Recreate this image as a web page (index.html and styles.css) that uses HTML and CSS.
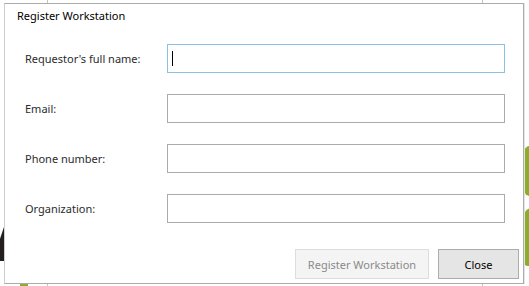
FILE: index.html
```html
<!DOCTYPE html>
<html lang="en">
  <head>
    <meta charset="UTF-8" />
    <title>Register Workstation</title>
    <link rel="stylesheet" href="styles.css">
  </head>
  <body>
    <div class="desktop">
      <div class="back-window top"></div>
      <div class="back-window bottom"></div>
      <div class="leaf leaf-top"></div>
      <div class="leaf leaf-bottom"></div>
      <div class="leaf leaf-foot"></div>
      <div class="dark-shape"></div>

      <div class="dialog">
        <div class="dialog-title">Register Workstation</div>
        <form class="reg-form">
          <div class="form-row">
            <label for="fullname">Requestor's full name:</label>
            <div class="field">
              <input type="text" id="fullname" class="focused">
              <span class="caret"></span>
            </div>
          </div>
          <div class="form-row">
            <label for="email">Email:</label>
            <div class="field"><input type="text" id="email"></div>
          </div>
          <div class="form-row">
            <label for="phone">Phone number:</label>
            <div class="field"><input type="text" id="phone"></div>
          </div>
          <div class="form-row">
            <label for="org">Organization:</label>
            <div class="field"><input type="text" id="org"></div>
          </div>
          <div class="button-row">
            <button type="button" class="btn btn-register" disabled>Register Workstation</button>
            <button type="button" class="btn btn-close">Close</button>
          </div>
        </form>
      </div>
    </div>
  </body>
</html>
```

FILE: styles.css
```css
body {
  margin: 0;
  background: #fff;
  font-family: "Segoe UI", "Noto Sans", sans-serif;
  color: #1e1e1e;
}
.desktop {
  position: relative;
  width: 529px;
  height: 286px;
  overflow: hidden;
  background: #fff;
}
.back-window {
  position: absolute;
  left: 47px;
  width: 434px;
  border: 1px solid #c4c4c4;
}
.back-window.top {
  top: 0;
  height: 4px;
  border-top: 0;
}
.back-window.bottom {
  top: 283px;
  height: 10px;
  border-bottom: 0;
}
.leaf {
  position: absolute;
  background: #8dac2a;
}
.leaf-top {
  left: 524px;
  top: 146px;
  width: 10px;
  height: 50px;
  border-radius: 6px 0 0 6px;
}
.leaf-bottom {
  left: 524px;
  top: 208px;
  width: 10px;
  height: 58px;
  border-radius: 8px 0 0 4px;
}
.leaf-foot {
  left: 20px;
  top: 284px;
  width: 8px;
  height: 4px;
}
.dark-shape {
  position: absolute;
  left: 0;
  top: 224px;
  width: 5px;
  height: 37px;
  background: #231f1e;
  clip-path: polygon(100% 0, 100% 100%, 0 100%, 0 40%);
}
.dialog {
  position: absolute;
  left: 4px;
  top: 3px;
  width: 518px;
  height: 279px;
  background: #fff;
  border: 1px solid #ababab;
  border-left-color: #cfcfcf;
  box-shadow: 1px 0 0 #e4e4e4;
}
.dialog-title {
  padding: 4px 0 0 12px;
  height: 20px;
  font-size: 11px;
  line-height: 16px;
  color: #000;
}
.reg-form {
  padding: 16px 4px 0 20px;
}
.form-row {
  display: flex;
  align-items: center;
  margin-bottom: 21px;
}
label {
  width: 142px;
  font-size: 11px;
  color: #2b2b2b;
}
.field {
  position: relative;
}
input {
  display: block;
  box-sizing: border-box;
  width: 338px;
  height: 29px;
  border: 1px solid #ababab;
  padding: 0 5px;
  font: inherit;
  outline: none;
}
input.focused {
  border-color: #8cc1e4;
}
.caret {
  position: absolute;
  left: 5px;
  top: 7px;
  width: 1px;
  height: 15px;
  background: #000;
}
.button-row {
  display: flex;
  justify-content: flex-end;
  gap: 9px;
  margin-top: 26px;
}
.btn {
  box-sizing: border-box;
  height: 30px;
  padding: 0;
  white-space: nowrap;
  font-family: inherit;
  font-size: 11px;
  color: #000;
  background: #e5e5e5;
  border: 1px solid #acacac;
}
.btn-register:disabled {
  width: 134px;
  color: #8a8a8a;
  background: #f4f4f4;
  border-color: #dcdcdc;
}
.btn-close {
  width: 81px;
}
```
